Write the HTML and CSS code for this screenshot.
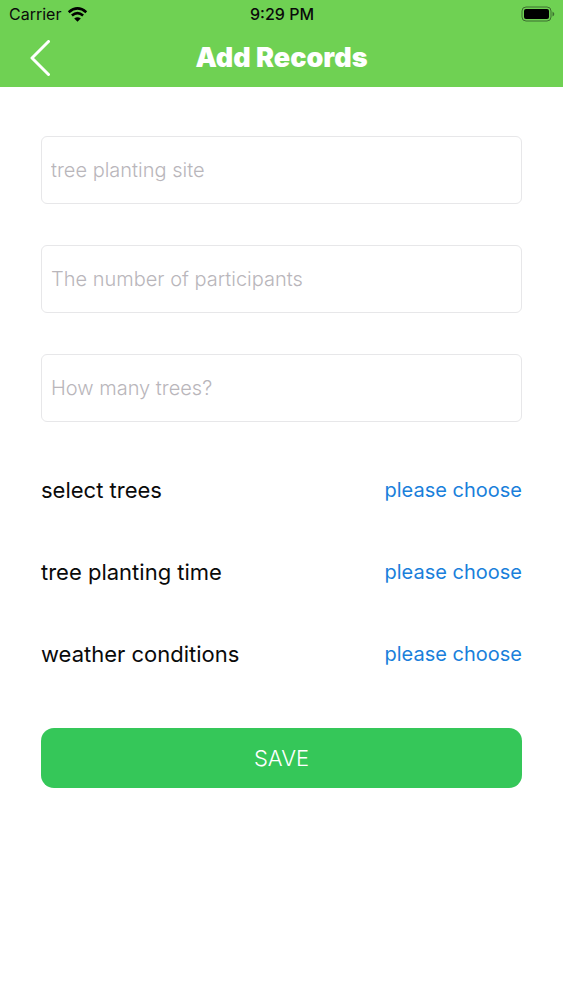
FILE: index.html
```html
<!DOCTYPE html>
<html lang="en">
<head>
  <meta charset="UTF-8">
  <meta name="viewport" content="width=device-width, initial-scale=1.0">
  <title>Add Records</title>
  <link rel="stylesheet" href="styles.css">
</head>
<body>
  <header class="header">
    <div class="status-bar">
      <div class="carrier">
        <span>Carrier</span>
        <svg class="wifi" viewBox="0 0 20 15" aria-hidden="true">
          <path d="M1.2 5.2 Q10 -2.4 18.8 5.2" />
          <path d="M4.4 8.5 Q10 3.7 15.6 8.5" />
          <path class="wifi-dot" d="M10 14.8 L6.7 11.5 Q10 8.9 13.3 11.5 Z" />
        </svg>
      </div>
      <span class="time">9:29 PM</span>
      <div class="battery">
        <svg viewBox="0 0 34 16" aria-hidden="true">
          <rect class="battery-case" x="1" y="1" width="29" height="14" rx="4" />
          <rect x="3" y="3" width="25" height="10" rx="2" />
          <path class="battery-tip" d="M31.5 5.5 Q33.3 6.5 33.3 8 Q33.3 9.5 31.5 10.5 Z" />
        </svg>
      </div>
    </div>
    <div class="nav-bar">
      <button class="back" type="button" aria-label="Back">
        <svg viewBox="0 0 20 36" aria-hidden="true">
          <path d="M18.5 1.5 L2 18 L18.5 34.5" />
        </svg>
      </button>
      <h1>Add Records</h1>
    </div>
  </header>

  <form class="record-form">
    <div class="fields">
      <input type="text" name="site" placeholder="tree planting site" aria-label="tree planting site">
      <input type="text" name="participants" inputmode="numeric" placeholder="The number of participants" aria-label="The number of participants">
      <input type="text" name="trees" inputmode="numeric" placeholder="How many trees?" aria-label="How many trees?">
    </div>

    <div class="choices">
      <div class="choice">
        <label for="treeType">select trees</label>
        <button type="button" id="treeType">please choose</button>
      </div>
      <div class="choice">
        <label for="plantingTime">tree planting time</label>
        <button type="button" id="plantingTime">please choose</button>
      </div>
      <div class="choice">
        <label for="weather">weather conditions</label>
        <button type="button" id="weather">please choose</button>
      </div>
    </div>

    <button class="save" type="submit">SAVE</button>
  </form>
</body>
</html>
```
FILE: styles.css
```css
* {
  box-sizing: border-box;
}
body {
  margin: 0;
  background: white;
  color: #0a0a0a;
  font-family: Inter, "Liberation Sans", sans-serif;
}
button {
  padding: 0;
  border: none;
  background: none;
  font-family: inherit;
  cursor: pointer;
}

/* Header */
.header {
  background: #6fd153;
}
.status-bar {
  display: grid;
  grid-template-columns: 1fr auto 1fr;
  align-items: center;
  height: 28px;
  padding: 0 8px 0 9px;
  font-size: 16px;
}
.carrier {
  display: flex;
  align-items: center;
  gap: 6px;
}
.wifi {
  width: 21px;
  height: 15px;
  fill: none;
  stroke: black;
  stroke-width: 2.6;
}
.wifi .wifi-dot {
  fill: black;
  stroke: none;
}
.time {
  font-weight: 500;
}
.battery {
  display: flex;
  justify-content: flex-end;
}
.battery svg {
  width: 34px;
  height: 16px;
}
.battery-case {
  fill: none;
  stroke: #3d6e30;
}
.battery-tip {
  fill: #3d6e30;
}
.nav-bar {
  display: grid;
  grid-template-columns: 1fr auto 1fr;
  align-items: center;
  height: 59px;
  padding: 0 30px;
}
.back {
  justify-self: start;
}
.back svg {
  display: block;
  width: 20px;
  height: 36px;
  fill: none;
  stroke: white;
  stroke-width: 3;
  stroke-linecap: round;
  stroke-linejoin: round;
}
h1 {
  margin: 0;
  color: white;
  font-size: 27px;
  font-weight: 900;
}

/* Form */
.record-form {
  padding: 49px 41px;
}
.fields {
  display: flex;
  flex-direction: column;
  gap: 41px;
}
.fields input {
  width: 100%;
  height: 68px;
  padding: 0 9px;
  border: 1px solid #e7e7e9;
  border-radius: 6px;
  background: white;
  color: #0a0a0a;
  font-family: inherit;
  font-size: 20px;
}
.fields input::placeholder {
  color: #b9b6bb;
  font-weight: 300;
}
.choices {
  display: flex;
  flex-direction: column;
  gap: 40px;
  margin: 47px 0 53px;
}
.choice {
  display: flex;
  justify-content: space-between;
  align-items: center;
  height: 42px;
}
.choice label {
  font-size: 22px;
}
.choice button {
  color: #1a7fdb;
  font-size: 20px;
}
.save {
  width: 100%;
  height: 60px;
  border-radius: 13px;
  background: #35c759;
  color: white;
  font-size: 22px;
  font-weight: 300;
}
```
